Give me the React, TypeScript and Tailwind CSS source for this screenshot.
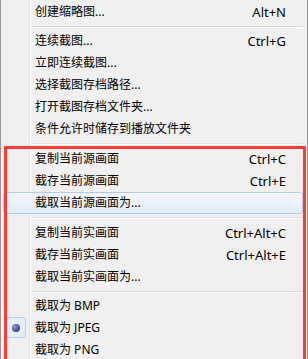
import React from "react";

type Item = { label: string; shortcut?: string; hover?: boolean; checked?: boolean };

const groups: Item[][] = [
	[{ label: "创建缩略图...", shortcut: "Alt+N" }],
	[
		{ label: "连续截图...", shortcut: "Ctrl+G" },
		{ label: "立即连续截图..." },
		{ label: "选择截图存档路径..." },
		{ label: "打开截图存档文件夹..." },
		{ label: "条件允许时储存到播放文件夹" },
	],
	[
		{ label: "复制当前源画面", shortcut: "Ctrl+C" },
		{ label: "截存当前源画面", shortcut: "Ctrl+E" },
		{ label: "截取当前源画面为...", hover: true },
	],
	[
		{ label: "复制当前实画面", shortcut: "Ctrl+Alt+C" },
		{ label: "截存当前实画面", shortcut: "Ctrl+Alt+E" },
		{ label: "截取当前实画面为..." },
	],
	[
		{ label: "截取为 BMP" },
		{ label: "截取为 JPEG", checked: true },
		{ label: "截取为 PNG" },
	],
];

function Row({ item }: { item: Item }) {
	return (
		<div className="relative h-[22px] flex items-center">
			{item.hover && (
				<div className="absolute top-0 bottom-0 left-[2px] right-[4px] rounded-[3px] border border-[#aeccf4] bg-[linear-gradient(to_bottom,#f3f6fb,#e3ecfa)]" />
			)}
			{item.checked && (
				<div className="absolute left-[5px] top-0 w-[20px] h-[21px] rounded-[3px] border border-[#b4d0f5] bg-[#e6eefa] flex items-center justify-center">
					<div className="w-[8px] h-[8px] rounded-full bg-[radial-gradient(circle_at_35%_35%,#9a9ad8,#3a3a8c_70%)]" />
				</div>
			)}
			<span className="relative pl-[34px] flex-1 text-[12px] text-black leading-none whitespace-nowrap">
				{item.label}
			</span>
			{item.shortcut && (
				<span className="relative pr-[21px] text-[13px] text-black leading-none whitespace-nowrap">
					{item.shortcut}
				</span>
			)}
		</div>
	);
}

function Separator({ tall }: { tall: boolean }) {
	return (
		<div className={tall ? "h-[8px] flex flex-col justify-center" : "h-[7px] flex flex-col justify-center"}>
			<div className="ml-[30px] mr-[4px] h-px bg-[#e0e0e0]" />
			<div className="ml-[30px] mr-[4px] h-px bg-white" />
		</div>
	);
}

export default function App() {
	return (
		<div
			className="relative w-[308px] h-[359px] overflow-hidden border-l border-r border-[#979797] pt-px bg-[linear-gradient(to_right,#f0f0f0_28px,#e2e3e3_28px,#e2e3e3_29px,#ffffff_29px,#ffffff_30px,#f0f0f0_30px)]"
			style={{ fontFamily: '"Noto Sans", "Noto Sans CJK SC", sans-serif' }}
		>
			{groups.map((g, gi) => (
				<div key={gi}>
					{gi > 0 && <Separator tall={gi === 2 || gi === 3} />}
					{g.map((item, i) => (
						<Row key={i} item={item} />
					))}
				</div>
			))}
			{/* red annotation box */}
			<div className="absolute left-[3px] right-[1px] top-[146px] bottom-[-10px] border-[3px] border-[#ff3a3a]" />
		</div>
	);
}
